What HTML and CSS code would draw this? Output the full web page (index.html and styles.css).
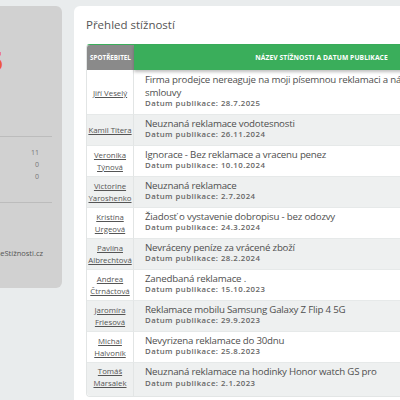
FILE: index.html
```html
<!DOCTYPE html>
<html lang="cs">
<head>
  <meta charset="UTF-8">
  <title>Přehled stížností</title>
  <link rel="stylesheet" href="styles.css">
</head>
<body>
  <div class="page">
    <aside class="sideCard">
      <div class="bigCount">15</div>
      <div class="sideRule"></div>
      <ul class="stats">
        <li><span>Zveřejněné</span><b>11</b></li>
        <li><span>Vyřešené</span><b>0</b></li>
        <li><span>Nevyřešené</span><b>0</b></li>
      </ul>
      <div class="sideRule"></div>
      <p class="sideNote">Zdroj: VašeStížnosti.cz</p>
    </aside>

    <main class="mainCard">
      <h2 class="cardTitle">Přehled stížností</h2>
      <table class="complaints">
        <thead>
          <tr>
            <th class="colConsumer">Spotřebitel</th>
            <th class="colTitle">Název stížnosti a datum publikace</th>
          </tr>
        </thead>
        <tbody>
          <tr>
            <td class="who"><a href="#">Jiří Veselý</a></td>
            <td><div class="subject">Firma prodejce nereaguje na moji písemnou reklamaci a návrh na odstoupení od smlouvy</div><div class="date">Datum publikace: 28.7.2025</div></td>
          </tr>
          <tr>
            <td class="who"><a href="#">Kamil Titera</a></td>
            <td><div class="subject">Neuznaná reklamace vodotesnosti</div><div class="date">Datum publikace: 26.11.2024</div></td>
          </tr>
          <tr>
            <td class="who"><a href="#">Veronika Týnová</a></td>
            <td><div class="subject">Ignorace - Bez reklamace a vracenu penez</div><div class="date">Datum publikace: 10.10.2024</div></td>
          </tr>
          <tr>
            <td class="who"><a href="#">Victorine Yaroshenko</a></td>
            <td><div class="subject">Neuznaná reklamace</div><div class="date">Datum publikace: 2.7.2024</div></td>
          </tr>
          <tr>
            <td class="who"><a href="#">Kristína Urgeová</a></td>
            <td><div class="subject">Žiadosť o vystavenie dobropisu - bez odozvy</div><div class="date">Datum publikace: 24.3.2024</div></td>
          </tr>
          <tr>
            <td class="who"><a href="#">Pavlína Albrechtová</a></td>
            <td><div class="subject">Nevráceny peníze za vrácené zboží</div><div class="date">Datum publikace: 28.2.2024</div></td>
          </tr>
          <tr>
            <td class="who"><a href="#">Andrea Čtrnáctová</a></td>
            <td><div class="subject">Zanedbaná reklamace .</div><div class="date">Datum publikace: 15.10.2023</div></td>
          </tr>
          <tr>
            <td class="who"><a href="#">Jaromíra Friesová</a></td>
            <td><div class="subject">Reklamace mobilu Samsung Galaxy Z Flip 4 5G</div><div class="date">Datum publikace: 29.9.2023</div></td>
          </tr>
          <tr>
            <td class="who"><a href="#">Michal Halvoník</a></td>
            <td><div class="subject">Nevyrizena reklamace do 30dnu</div><div class="date">Datum publikace: 25.8.2023</div></td>
          </tr>
          <tr>
            <td class="who"><a href="#">Tomáš Marsalek</a></td>
            <td><div class="subject">Neuznaná reklamace na hodinky Honor watch GS pro</div><div class="date">Datum publikace: 2.1.2023</div></td>
          </tr>
        </tbody>
      </table>
    </main>
  </div>
</body>
</html>
```

FILE: styles.css
```css
body {
  margin: 0;
  background: #e9eced;
  font-family: "Open Sans", "Liberation Sans", sans-serif;
  color: #555;
  overflow: hidden;
}

.page {
  display: flex;
  align-items: flex-start;
  gap: 12px;
  padding-top: 6px;
}

/* Left summary card, mostly off screen */
.sideCard {
  flex: none;
  width: 200px;
  height: 282px;
  margin-left: -138px;
  background: #d1d1d1;
  border-radius: 6px;
  box-sizing: border-box;
  padding: 40px 10px 0 0;
}

.bigCount {
  text-align: right;
  padding-right: 49px;
  font-size: 26px;
  font-weight: 700;
  line-height: 30px;
  color: #ea5a3c;
}

.sideRule {
  height: 1px;
  background: #bcbcbc;
  margin-top: 60px;
}

.stats {
  list-style: none;
  margin: 10px 0 0;
  padding: 0 13px 0 20px;
  font-size: 7px;
  color: #777;
}

.stats li {
  display: flex;
  justify-content: space-between;
  line-height: 12px;
}

.stats b {
  font-weight: 400;
}

.stats + .sideRule {
  margin-top: 19px;
}

.sideNote {
  margin: 45px 0 0;
  text-align: right;
  padding-right: 9px;
  font-size: 7.5px;
  color: #555;
}

/* Main card */
.mainCard {
  flex: none;
  width: 460px;
  background: #fff;
  border-radius: 6px;
  padding: 10px 12px 20px;
}

.cardTitle {
  margin: 0 0 10px;
  font-size: 11.5px;
  font-weight: 400;
  line-height: 18px;
  color: #555;
}

.complaints {
  width: 424px;
  border-collapse: separate;
  border-spacing: 0;
  border: 1px solid #e2e5e5;
  border-top: 1px solid #3aae5b;
  border-radius: 4px;
}

.complaints th {
  color: #fff;
  font-weight: 700;
  text-transform: uppercase;
  padding: 0;
}

.colConsumer {
  width: 47px;
  height: 24px;
  background: #8a8a8a;
  border-top-left-radius: 3px;
  vertical-align: middle;
  font-size: 6.3px;
}

.colTitle {
  background: #3aae5b;
  height: 25px;
  box-shadow: 0 2px 3px rgba(0, 0, 0, 0.25);
  position: relative;
  font-size: 6.7px;
  letter-spacing: 0.1px;
}

.complaints td {
  padding: 3px 6px 5px 11px;
  vertical-align: middle;
  border-top: 1px solid #e6e9e9;
}

.complaints td.who {
  padding: 2px 1px;
  text-align: center;
  border-right: 1px solid #e2e5e5;
  font-size: 7.8px;
  line-height: 12px;
}

.complaints tbody tr:first-child td {
  border-top: none;
  padding-top: 4px;
}

.complaints tbody tr:nth-child(even) td {
  background: #eef0f0;
}

.complaints tbody tr:last-child td {
  padding-bottom: 7px;
}

.complaints tbody tr:last-child td.who {
  border-bottom-left-radius: 4px;
}

.who a {
  color: #555;
}

.subject {
  font-size: 9.7px;
  line-height: 12.5px;
  letter-spacing: -0.2px;
  color: #4f4f4f;
}

.date {
  font-size: 7.8px;
  font-weight: 600;
  line-height: 9.5px;
  letter-spacing: 0.45px;
  color: #666;
}
```
